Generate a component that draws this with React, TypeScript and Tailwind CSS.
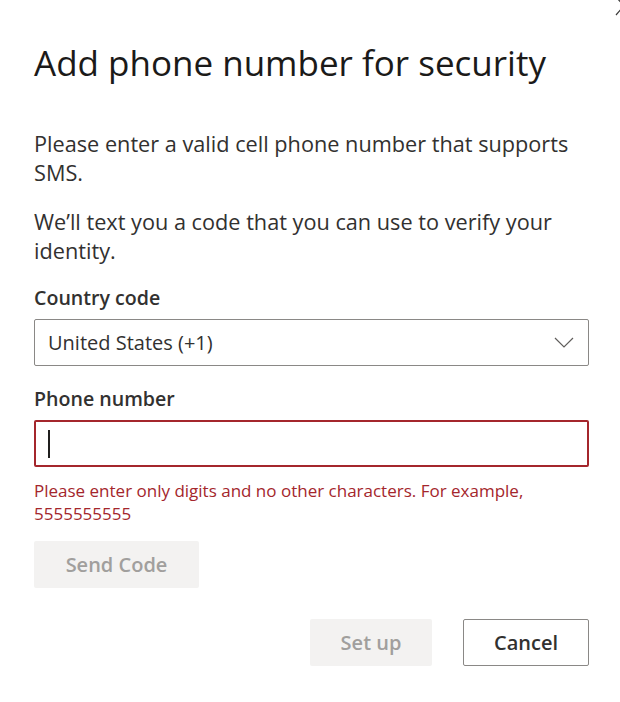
import React from "react";

export default function App() {
  const font = { fontFamily: '"Open Sans", "Noto Sans", sans-serif' };
  return (
    <div className="relative w-[620px] h-[702px] bg-white overflow-hidden" style={font}>
      <svg className="absolute left-0 top-0" width="620" height="20" viewBox="0 0 620 20">
        <path d="M616 15 L630 -1 M615 -4 L630 12" stroke="#3b3a39" strokeWidth="1.2" fill="none" />
      </svg>
      <div className="px-[34px] pt-[40px]">
        <div className="flex flex-col w-[560px]">
          <h1 className="text-[35px] leading-[46px] font-normal text-[#1b1a19] whitespace-nowrap">
            Add phone number for security
          </h1>
          <p className="mt-[43px] text-[21.7px] leading-[29px] text-[#323130]">
            Please enter a valid cell phone number that supports SMS.
          </p>
          <p className="mt-[20px] text-[21.7px] leading-[29px] text-[#323130]">
            We’ll text you a code that you can use to verify your identity.
          </p>
          <label className="mt-[20px] text-[19.6px] leading-[26px] font-semibold text-[#323130]">
            Country code
          </label>
          <div className="mt-[8px] h-[47px] w-[555px] border border-[#8a8886] rounded-[2px] flex items-center justify-between pl-[13px] pr-[14px]">
            <span className="text-[20px] text-[#323130]">United States (+1)</span>
            <svg width="20" height="12" viewBox="0 0 20 12">
              <path d="M1 1 L10 10 L19 1" stroke="#605e5c" strokeWidth="1.2" fill="none" />
            </svg>
          </div>
          <label className="mt-[20px] text-[19.6px] leading-[26px] font-semibold text-[#323130]">
            Phone number
          </label>
          <div className="mt-[8px] h-[47px] w-[555px] border-2 border-[#a4262c] rounded-[2px] flex items-center pl-[12px]">
            <div className="w-[2px] h-[28px] bg-[#201f1e]" />
          </div>
          <p className="mt-[11.5px] w-[555px] text-[17px] leading-[23px] text-[#a4262c]">
            Please enter only digits and no other characters. For example, 5555555555
          </p>
          <div className="mt-[16.5px]">
            <button className="h-[47px] w-[165px] bg-[#f3f2f1] rounded-[2px] text-[20px] font-semibold text-[#a19f9d]">
              Send Code
            </button>
          </div>
          <div className="mt-[31px] flex justify-end gap-[31px] w-[555px]">
            <button className="h-[47px] w-[122px] bg-[#f3f2f1] rounded-[2px] text-[20px] font-semibold text-[#a19f9d]">
              Set up
            </button>
            <button className="h-[47px] w-[126px] bg-white border border-[#8a8886] rounded-[2px] text-[20px] font-semibold text-[#323130]">
              Cancel
            </button>
          </div>
        </div>
      </div>
    </div>
  );
}
